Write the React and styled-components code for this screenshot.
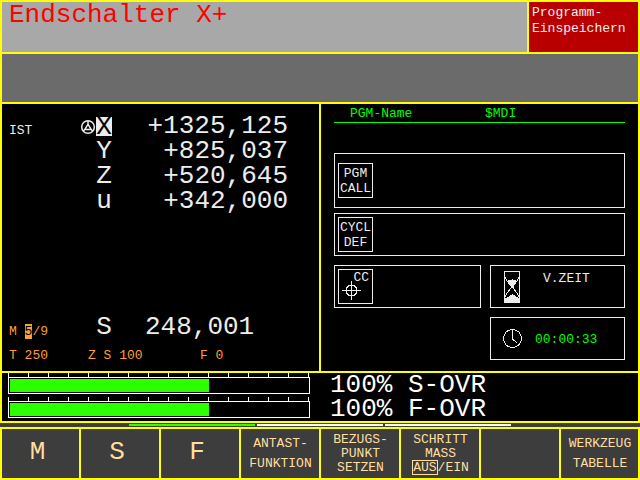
import React from "react";
import styled, { createGlobalStyle } from "styled-components";

const c = {
  frame: "#ffff00",
  key: "#3d3d3d",
  keyText: "#ffdf9f",
  ink: "#ececec",
  green: "#00ff00",
  bar: "#2bff00",
  orange: "#ff9f30",
};

const Global = createGlobalStyle`
  *, *::before, *::after { box-sizing: border-box; }
  body { margin: 0; background: #000; }
  svg { display: block; }
`;

const Screen = styled.div`
  min-height: 100vh;
  display: flex;
  flex-direction: column;
  background: #000;
  color: ${c.ink};
  font: 13px/16px "Liberation Mono", "DejaVu Sans Mono", monospace;
  white-space: pre;
`;

/* Header */
const Header = styled.header`
  display: grid;
  grid-template-columns: 1fr 109px;
  gap: 2px;
  min-height: 54px;
  background: ${c.frame};
  border: 2px solid ${c.frame};
`;
const Alarm = styled.h1`
  margin: 0;
  padding: 0 7px;
  background: #a8a8a8;
  color: #ff0000;
  font-size: 26px;
  font-weight: 400;
  line-height: 26px;
`;
const Mode = styled.div`
  padding: 3px;
  background: #b80000;
  color: #f0f0f0;
`;
const MessageBand = styled.div`
  height: 50px;
  background: #6b6b6b;
  border: 2px solid ${c.frame};
  border-top: 0;
`;

/* Main area */
const Main = styled.main`
  flex: 1;
  display: grid;
  grid-template-columns: 1fr 1fr;
  border-bottom: 2px solid ${c.frame};
`;
const PositionPanel = styled.section`
  display: flex;
  flex-direction: column;
  justify-content: space-between;
  padding: 10px 0 5px 7px;
  border: solid ${c.frame};
  border-width: 0 1px 0 2px;
`;
const Axes = styled.table`
  width: 279px;
  table-layout: fixed;
  border-collapse: collapse;
  font-size: 26px;
  line-height: 25px;
`;
const StatusCell = styled.td`
  width: 71px;
  padding: 8px 0 0;
  font-size: 13px;
  line-height: 17px;
  color: ${(p) => (p.$orange ? c.orange : c.ink)};
`;
const IconCell = styled.td`
  width: 16px;
  padding: 0;
`;
const AxisName = styled.th`
  width: 16px;
  height: 25px;
  padding: 0;
  font-weight: 400;
  text-align: center;
`;
const Selected = styled.span`
  display: block;
  height: 19px;
  line-height: 21px;
  background: ${c.ink};
  color: #000;
`;
const Value = styled.td`
  padding: 0 0 0 ${(p) => (p.$left ? "33px" : "0")};
  text-align: ${(p) => (p.$left ? "left" : "right")};
`;
const Marked = styled.mark`
  background: ${c.orange};
  color: #000;
`;
const ToolLine = styled.div`
  display: grid;
  grid-template-columns: 79px 112px 1fr;
  padding-top: 6px;
  line-height: 20px;
  color: ${c.orange};
`;

const ProgramPanel = styled.section`
  padding: 2px 13px 11px;
  border: solid ${c.frame};
  border-width: 0 2px 0 1px;
`;
const ProgramHead = styled.div`
  display: grid;
  grid-template-columns: 135px 1fr;
  margin-bottom: 30px;
  padding-left: 16px;
  border-bottom: 1px solid ${c.green};
  color: ${c.green};
`;
const Name = styled.h2`
  margin: 0;
  font: inherit;
`;
const Slots = styled.div`
  display: grid;
  grid-template-columns: 147fr 135fr;
  gap: 9px;
`;
const Slot = styled.div`
  grid-column: ${(p) => p.$column || "auto"};
  display: flex;
  align-items: center;
  height: ${(p) => (p.$tall ? "55px" : "43px")};
  margin-bottom: ${(p) => (p.$tall ? "-4px" : "0")};
  padding: 0 3px;
  border: 1px solid ${c.ink};
`;
const Tag = styled.div`
  display: grid;
  place-content: center;
  width: 35px;
  height: 35px;
  border: 1px solid ${c.ink};
  line-height: 15px;
  text-align: center;
`;
const CenterTag = styled(Tag)`
  place-content: stretch;
  & > * { grid-area: 1 / 1; }
`;
const TagText = styled.span`
  justify-self: end;
  padding-right: 3px;
`;
const Gauge = styled.div`
  display: grid;
  place-items: center;
  width: 36px;
`;
const SlotTitle = styled.span`
  align-self: flex-start;
  padding: 5px 0 0 13px;
`;
const Time = styled.time`
  padding: 2px 0 0 5px;
  color: ${c.green};
`;

/* Override bars */
const Overrides = styled.section`
  border: solid ${c.frame};
  border-width: 0 2px 2px;
  color: #fff;
`;
const Override = styled.div`
  display: grid;
  grid-template-columns: minmax(0, 302fr) minmax(0, 308fr);
  column-gap: 20px;
  align-items: end;
  height: 23px;
  padding-left: 6px;
  & + & { height: 25px; }
`;
const OverrideText = styled.span`
  font-size: 26px;
  line-height: 23px;
`;
const Scale = styled.div`
  display: flex;
  flex-direction: column;
  justify-content: flex-end;
  height: 100%;
  padding-bottom: 3px;
`;
const Ticks = styled.div`
  flex: 0 1 4px;
  min-height: 0;
  display: flex;
  justify-content: space-between;
  padding-right: 1px;
`;
const Tick = styled.i`
  width: 1px;
  background: #fff;
`;
const Track = styled.div`
  flex: none;
  height: 17px;
  padding: 1px;
  border: 1px solid #fff;
`;
const Fill = styled.div`
  height: 100%;
  background: ${c.bar};
`;

/* Soft keys */
const Pages = styled.div`
  display: grid;
  grid-template-columns: repeat(5, 1fr);
  height: 4px;
  padding: 1px 0;
  background: ${c.key};
`;
const Page = styled.span`
  margin: 0 1px;
  background: ${(p) => p.$color};
`;
const Keys = styled.nav`
  display: grid;
  grid-template-columns: repeat(8, 1fr);
  min-height: 53px;
`;
const Key = styled.button`
  min-width: 0;
  padding: ${(p) => (p.$big ? "0 6px 3px 0" : "1px 0 0 1px")};
  border: solid ${c.frame};
  border-width: 2px 1px;
  border-radius: 0;
  background: ${c.key};
  color: ${c.keyText};
  font: inherit;
  font-size: ${(p) => (p.$big ? "26px" : "13px")};
  line-height: ${(p) => (p.$dense ? "14px" : "20px")};
  white-space: pre;
  &:first-child { border-left-width: 2px; }
  &:last-child { border-right-width: 2px; }
`;
const Choice = styled.span`
  padding: 0 1px;
  outline: 1px solid ${c.keyText};
  outline-offset: -1px;
`;

const Handwheel = () => (
  <svg width="16" height="16" viewBox="0 0 16 16" fill="none" stroke={c.ink} strokeWidth="1.5" aria-hidden="true">
    <circle cx="8" cy="8" r="6.3" />
    <path d="M8 2v4M7.9 5.3L4.8 10.5h6.4L8.1 5.3M5 10.4L3.2 12M11 10.4l1.8 1.6" />
  </svg>
);

const Crosshair = () => (
  <svg width="33" height="33" viewBox="0 0 33 33" fill="none" stroke={c.ink} shapeRendering="crispEdges" aria-hidden="true">
    <circle cx="12.5" cy="20.5" r="5.5" />
    <path d="M3 20.5h19M12.5 11v19" />
  </svg>
);

const Hourglass = () => (
  <svg width="16" height="32" viewBox="0 0 16 32" fill="none" stroke={c.ink} shapeRendering="crispEdges" aria-hidden="true">
    <rect x=".5" y=".5" width="15" height="31" />
    <path d="M1 6l2 4 4 5v2l-4 5-2 4M15 6l-2 4-4 5v2l4 5 2 4" />
    <path fill={c.ink} stroke="none" d="M3 10l2-1h2l1-1 1 1h2l2 1-2 3-2 2v2H7v-2l-2-2zM1 27l3-1 2-2h1l1-1 1 1h1l2 2 3 1v4H1z" />
  </svg>
);

const Clock = () => (
  <svg width="19" height="19" viewBox="0 0 19 19" fill="none" stroke={c.ink} shapeRendering="crispEdges" aria-hidden="true">
    <circle cx="9.5" cy="9.5" r="9" />
    <path d="M9.5 1v9l4.5 4" />
  </svg>
);

const axes = [
  ["X", "+1325,125"],
  ["Y", "+825,037"],
  ["Z", "+520,645"],
  ["u", "+342,000"],
];
const overrides = [
  ["S-OVR", 100],
  ["F-OVR", 100],
];
const pages = ["transparent", c.bar, "#fff", "#fff", "transparent"];
const MAX = 150;

export default function App() {
  return (
    <Screen>
      <Global />
      <Header>
        <Alarm>Endschalter X+</Alarm>
        <Mode>{"Programm-\nEinspeichern"}</Mode>
      </Header>
      <MessageBand />
      <Main>
        <PositionPanel>
          <Axes>
            <tbody>
              {axes.map(([name, value], i) => (
                <tr key={name}>
                  <StatusCell>{i === 0 ? "IST" : ""}</StatusCell>
                  <IconCell>{i === 0 && <Handwheel />}</IconCell>
                  <AxisName scope="row">{i === 0 ? <Selected>{name}</Selected> : name}</AxisName>
                  <Value>{value}</Value>
                </tr>
              ))}
            </tbody>
          </Axes>
          <div>
            <Axes>
              <tbody>
                <tr>
                  <StatusCell $orange>
                    M <Marked>5</Marked>/9
                  </StatusCell>
                  <IconCell />
                  <AxisName scope="row">S</AxisName>
                  <Value $left>248,001</Value>
                </tr>
              </tbody>
            </Axes>
            <ToolLine>
              <span>T 250</span>
              <span>Z S 100</span>
              <span>F 0</span>
            </ToolLine>
          </div>
        </PositionPanel>
        <ProgramPanel>
          <ProgramHead>
            <Name>PGM-Name</Name>
            <span>$MDI</span>
          </ProgramHead>
          <Slots>
            <Slot $tall $column="1 / -1">
              <Tag>{"PGM\nCALL"}</Tag>
            </Slot>
            <Slot $column="1 / -1">
              <Tag>{"CYCL\nDEF"}</Tag>
            </Slot>
            <Slot>
              <CenterTag>
                <Crosshair />
                <TagText>CC</TagText>
              </CenterTag>
            </Slot>
            <Slot>
              <Gauge>
                <Hourglass />
              </Gauge>
              <SlotTitle>V.ZEIT</SlotTitle>
            </Slot>
            <Slot $column="2">
              <Gauge>
                <Clock />
              </Gauge>
              <Time>00:00:33</Time>
            </Slot>
          </Slots>
        </ProgramPanel>
      </Main>
      <Overrides>
        {overrides.map(([name, value]) => (
          <Override key={name}>
            <Scale>
              <Ticks>
                {Array.from({ length: 16 }, (_, i) => (
                  <Tick key={i} />
                ))}
              </Ticks>
              <Track role="meter" aria-label={name} aria-valuemin={0} aria-valuemax={MAX} aria-valuenow={value}>
                <Fill style={{ width: `${(value / MAX) * 100}%` }} />
              </Track>
            </Scale>
            <OverrideText>{`${value}% ${name}`}</OverrideText>
          </Override>
        ))}
      </Overrides>
      <Pages>
        {pages.map((color, i) => (
          <Page key={i} $color={color} />
        ))}
      </Pages>
      <Keys>
        <Key $big>M</Key>
        <Key $big>S</Key>
        <Key $big>F</Key>
        <Key>{"ANTAST-\nFUNKTION"}</Key>
        <Key $dense>{"BEZUGS-\nPUNKT\nSETZEN"}</Key>
        <Key $dense>
          {"SCHRITT\nMASS\n"}
          <Choice>AUS</Choice>/EIN
        </Key>
        <Key aria-label="leer" />
        <Key>{"WERKZEUG\nTABELLE"}</Key>
      </Keys>
    </Screen>
  );
}
